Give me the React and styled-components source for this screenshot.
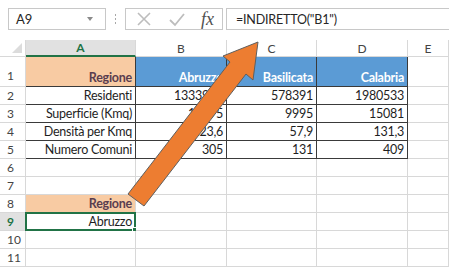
import React from 'react';
import styled, { createGlobalStyle } from 'styled-components';

const GlobalStyle = createGlobalStyle`
  html, body {
    margin: 0;
    padding: 0;
    background: #ffffff;
  }
  body {
    font-family: Lato, "Liberation Sans", sans-serif;
    overflow: hidden;
  }
`;

const Page = styled.div`
  position: relative;
  width: 449px;
  height: 270px;
  overflow: hidden;
  background: #ffffff;
`;

const Toolbar = styled.div`
  display: flex;
  align-items: stretch;
  height: 22px;
  padding: 8px 0 10px 8px;
`;

const NameBox = styled.div`
  width: 98px;
  display: flex;
  align-items: center;
  justify-content: space-between;
  border: 1px solid #c8c8c8;
  padding: 0 12px 0 7px;
  box-sizing: border-box;
  font-size: 13px;
  color: #262626;
`;

const Caret = styled.span`
  width: 0;
  height: 0;
  border-left: 3px solid transparent;
  border-right: 3px solid transparent;
  border-top: 4px solid #8a8a8a;
`;

const Dots = styled.div`
  width: 19px;
  display: flex;
  flex-direction: column;
  align-items: center;
  justify-content: center;
  gap: 2px;

  span {
    width: 1px;
    height: 2px;
    background: #a8a8a8;
  }
`;

const ButtonsBox = styled.div`
  width: 98px;
  display: flex;
  align-items: center;
  justify-content: space-between;
  border: 1px solid #c8c8c8;
  box-sizing: border-box;
  padding: 0 8px 0 10px;
`;

const Fx = styled.span`
  font-family: "Liberation Serif", serif;
  font-style: italic;
  font-size: 18px;
  color: #505050;
  line-height: 1;
`;

const FormulaBox = styled.div`
  flex: 1;
  margin-left: 3px;
  border: 1px solid #c8c8c8;
  border-right: none;
  display: flex;
  align-items: center;
  padding-left: 9px;
  font-size: 12.5px;
  letter-spacing: -0.2px;
  color: #262626;
`;

const Grid = styled.div`
  display: grid;
  grid-template-columns: 26px 110px 91px 90px 91px 1fr;
  grid-template-rows: 17px 30px repeat(10, 18px);
`;

const ColHead = styled.div`
  display: flex;
  align-items: center;
  justify-content: center;
  font-size: 12px;
  color: ${(p) => (p.$active ? '#217346' : '#444444')};
  font-weight: ${(p) => (p.$active ? 700 : 400)};
  background: ${(p) => (p.$active ? '#e1e1e1' : '#ffffff')};
  border-right: 1px solid #d8d8d8;
  border-bottom: ${(p) => (p.$active ? '2px solid #217346' : '1px solid #d8d8d8')};
  box-sizing: border-box;
`;

const Corner = styled.div`
  position: relative;
  border-right: 1px solid #d8d8d8;
  border-bottom: 1px solid #d8d8d8;
  box-sizing: border-box;

  &::after {
    content: '';
    position: absolute;
    right: 3px;
    bottom: 3px;
    width: 0;
    height: 0;
    border-left: 10px solid transparent;
    border-bottom: 10px solid #dcdcdc;
  }
`;

const RowHead = styled.div`
  display: flex;
  align-items: ${(p) => (p.$tall ? 'flex-end' : 'center')};
  padding-bottom: ${(p) => (p.$tall ? '3px' : '0')};
  padding-left: 7px;
  font-size: 12px;
  color: ${(p) => (p.$active ? '#217346' : '#444444')};
  font-weight: ${(p) => (p.$active ? 700 : 400)};
  background: ${(p) => (p.$active ? '#e1e1e1' : '#ffffff')};
  border-right: 1px solid #d8d8d8;
  border-bottom: 1px solid #d8d8d8;
  box-sizing: border-box;
`;

const Cell = styled.div`
  position: relative;
  display: flex;
  align-items: flex-end;
  justify-content: flex-end;
  padding: 0 3px 1px 0;
  font-size: 12.5px;
  letter-spacing: -0.25px;
  white-space: nowrap;
  overflow: hidden;
  background: ${(p) => p.$bg || '#ffffff'};
  color: ${(p) => p.$color || '#1e1e1e'};
  font-weight: ${(p) => (p.$bold ? 700 : 400)};
  border-right: 1px solid ${(p) => (p.$dark ? '#3a3a3a' : '#d8d8d8')};
  border-bottom: 1px solid ${(p) => (p.$dark ? '#3a3a3a' : '#d8d8d8')};
  box-sizing: border-box;
`;

const Selected = styled(Cell)`
  overflow: visible;

  &::before {
    content: '';
    position: absolute;
    left: -1px;
    top: -1px;
    right: -1px;
    bottom: -1px;
    border: 2px solid #217346;
  }

  &::after {
    content: '';
    position: absolute;
    right: -4px;
    bottom: -4px;
    width: 5px;
    height: 5px;
    background: #217346;
    border: 1px solid #ffffff;
  }
`;

const ArrowLayer = styled.svg`
  position: absolute;
  left: 0;
  top: 0;
  pointer-events: none;
`;

const PEACH = '#f8cba3';
const BLUE = '#5b9bd5';
const PLUM = '#5a3d4f';

const rows = [
  { label: '1', tall: true, cells: [
    { v: 'Regione', bg: PEACH, bold: true, color: PLUM, dark: true },
    { v: 'Abruzzo', bg: BLUE, bold: true, color: '#ffffff', dark: true },
    { v: 'Basilicata', bg: BLUE, bold: true, color: '#ffffff', dark: true },
    { v: 'Calabria', bg: BLUE, bold: true, color: '#ffffff', dark: true },
    {},
  ] },
  { label: '2', cells: [
    { v: 'Residenti', dark: true }, { v: '1333939', dark: true },
    { v: '578391', dark: true }, { v: '1980533', dark: true }, {},
  ] },
  { label: '3', cells: [
    { v: 'Superficie (Kmq)', dark: true }, { v: '10795', dark: true },
    { v: '9995', dark: true }, { v: '15081', dark: true }, {},
  ] },
  { label: '4', cells: [
    { v: 'Densità per Kmq', dark: true }, { v: '123,6', dark: true },
    { v: '57,9', dark: true }, { v: '131,3', dark: true }, {},
  ] },
  { label: '5', cells: [
    { v: 'Numero Comuni', dark: true }, { v: '305', dark: true },
    { v: '131', dark: true }, { v: '409', dark: true }, {},
  ] },
  { label: '6', cells: [{}, {}, {}, {}, {}] },
  { label: '7', cells: [{}, {}, {}, {}, {}] },
  { label: '8', cells: [{ v: 'Regione', bg: PEACH, bold: true, color: PLUM }, {}, {}, {}, {}] },
  { label: '9', active: true, cells: [{ v: 'Abruzzo', selected: true }, {}, {}, {}, {}] },
  { label: '10', cells: [{}, {}, {}, {}, {}] },
  { label: '11', cells: [{}, {}, {}, {}, {}] },
];

const columns = ['A', 'B', 'C', 'D', 'E'];

// arrow from the A8 corner up to the formula bar
const arrowPoints = [
  [144, 206], [246, 74], [253, 80], [258, 42], [223, 56], [230, 62], [128, 194],
].map((p) => p.join(',')).join(' ');

const App = () => {
  return (
    <Page>
      <GlobalStyle />
      <Toolbar>
        <NameBox>
          A9
          <Caret />
        </NameBox>
        <Dots>
          <span />
          <span />
          <span />
        </Dots>
        <ButtonsBox>
          <svg width="16" height="16" viewBox="0 0 16 16">
            <path d="M2 2 L14 14 M14 2 L2 14" stroke="#bdbdbd" strokeWidth="1.6" fill="none" />
          </svg>
          <svg width="18" height="16" viewBox="0 0 18 16">
            <path d="M2 9 L7 14 L16 3" stroke="#bdbdbd" strokeWidth="1.8" fill="none" />
          </svg>
          <Fx>fx</Fx>
        </ButtonsBox>
        <FormulaBox>=INDIRETTO("B1")</FormulaBox>
      </Toolbar>

      <Grid>
        <Corner />
        {columns.map((c) => (
          <ColHead key={c} $active={c === 'A'}>{c}</ColHead>
        ))}
        {rows.map((row) => (
          <React.Fragment key={row.label}>
            <RowHead $tall={row.tall} $active={row.active}>{row.label}</RowHead>
            {row.cells.map((cell, i) => {
              const Comp = cell.selected ? Selected : Cell;
              return (
                <Comp
                  key={i}
                  $bg={cell.bg}
                  $bold={cell.bold}
                  $color={cell.color}
                  $dark={cell.dark}
                >
                  {cell.v}
                </Comp>
              );
            })}
          </React.Fragment>
        ))}
      </Grid>

      <ArrowLayer width="449" height="270">
        <polygon points={arrowPoints} fill="#ed7d31" stroke="#5f5f5f" strokeWidth="1" strokeLinejoin="miter" />
      </ArrowLayer>
    </Page>
  );
};

export default App;
